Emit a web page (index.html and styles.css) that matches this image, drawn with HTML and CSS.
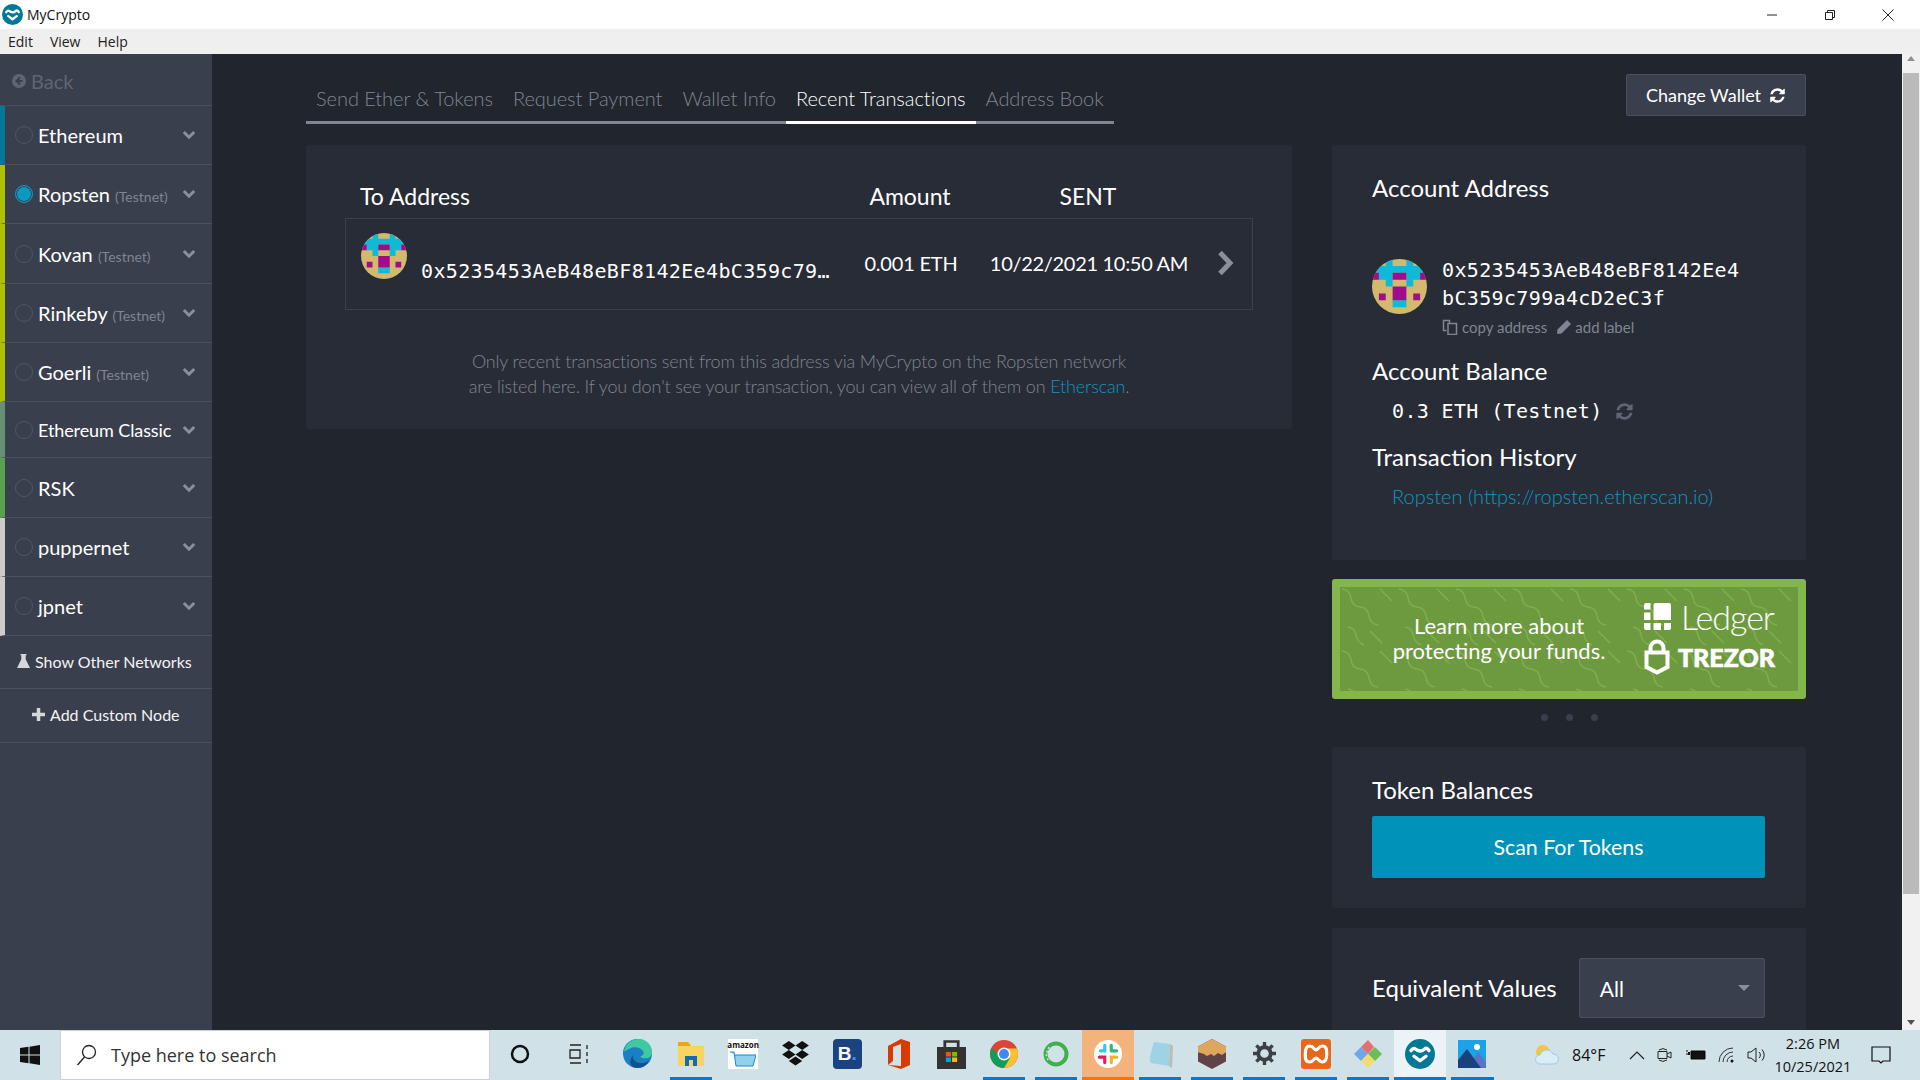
FILE: index.html
```html
<!DOCTYPE html>
<html lang="en">
<head>
  <meta charset="UTF-8" />
  <meta name="viewport" content="width=device-width, initial-scale=1.0" />
  <title>MyCrypto</title>
  <link rel="stylesheet" href="styles.css">
</head>
<body>
  <svg class="defs" width="0" height="0">
    <defs>
      <symbol id="identicon" viewBox="0 0 8 8">
        <rect width="8" height="8" fill="#d2b96e" />
        <path fill="#0fb9d8" d="M2 0h1v1h2V0h1v1h2v1H0V1h2zM1 2h2v1H1zM5 2h2v1H5zM2 3h1v1H2zM5 3h1v1H5zM3 6h2v1H3z" />
        <path fill="#a10b8e" d="M0 2h1v1H0zM3 2h2v1H3zM7 2h1v1H7zM3 4h2v2H3zM1 5h1v1H1zM6 5h1v1H6z" />
      </symbol>
      <symbol id="refresh" viewBox="0 0 1792 1792">
        <path fill="currentColor" d="M1639 1056q0 5-1 7-64 268-268 434.5t-478 166.5q-146 0-282.5-55t-243.5-157l-129 129q-19 19-45 19t-45-19-19-45v-448q0-26 19-45t45-19h448q26 0 45 19t19 45-19 45l-137 137q71 66 161 102t187 36q134 0 250-65t186-179q11-17 53-117 8-23 30-23h192q13 0 22.5 9.5t9.5 22.5zm25-800v448q0 26-19 45t-45 19h-448q-26 0-45-19t-19-45 19-45l138-138q-148-137-349-137-134 0-250 65t-186 179q-11 17-53 117-8 23-30 23h-199q-13 0-22.5-9.5t-9.5-22.5v-7q65-268 270-434.5t480-166.5q146 0 284 55.5t245 156.5l130-129q19-19 45-19t45 19 19 45z" />
      </symbol>
      <symbol id="chev" viewBox="0 0 14 10">
        <path d="M1.8 2 7 7.2 12.2 2" fill="none" stroke="currentColor" stroke-width="3" />
      </symbol>
      <symbol id="heart-mark" viewBox="0 0 40 40">
        <circle cx="20" cy="20" r="20" fill="#007896" />
        <path d="M8 15.500q3-4 6-2t6 2.500 6-2.500 6 2" fill="none" stroke="#fff" stroke-width="4.500" stroke-linecap="round" />
        <path d="M12 23l8 6 8-6" fill="none" stroke="#fff" stroke-width="4.500" stroke-linecap="round" stroke-linejoin="round" />
      </symbol>
      <pattern id="squiggle" width="57" height="62" patternUnits="userSpaceOnUse">
        <path d="M2 2q8 1 9 9t9 9 9 9 9 9M30 44l12 12M40 2l12 12M8 40q7 1 8 8t8 10" fill="none" stroke="#7fae4b" stroke-width="1.500" />
      </pattern>
    </defs>
  </svg>

  <div class="window">
    <header class="titlebar">
      <svg class="app-logo" width="21" height="21"><use href="#heart-mark" /></svg>
      <span class="app-name">MyCrypto</span>
      <div class="win-controls">
        <svg width="12" height="12" viewBox="0 0 12 12"><path d="M1 6h10" stroke="#222" /></svg>
        <svg width="12" height="12" viewBox="0 0 12 12"><path d="M1.500 3.500h7v7h-7zM3.500 3.500v-2h7v7h-2" fill="none" stroke="#222" /></svg>
        <svg width="12" height="12" viewBox="0 0 12 12"><path d="M.5.500l11 11M11.500.500l-11 11" stroke="#222" /></svg>
      </div>
    </header>
    <nav class="menubar">
      <span>Edit</span>
      <span>View</span>
      <span>Help</span>
    </nav>

    <div class="app">
      <aside class="sidebar">
        <div class="back">
          <svg width="14" height="14" viewBox="0 0 14 14"><circle cx="7" cy="7" r="7" fill="currentColor" /><path d="M8 3.500 4.500 7 8 10.500M5 7h5.500" fill="none" stroke="#3a3f4d" stroke-width="2" /></svg>
          <span>Back</span>
        </div>
        <div class="net mainnet"><i class="radio"></i><span class="net-name">Ethereum</span><svg class="chev" width="14" height="10"><use href="#chev" /></svg></div>
        <div class="net testnet"><i class="radio on"></i><span class="net-name">Ropsten <small>(Testnet)</small></span><svg class="chev" width="14" height="10"><use href="#chev" /></svg></div>
        <div class="net testnet tall"><i class="radio"></i><span class="net-name">Kovan <small>(Testnet)</small></span><svg class="chev" width="14" height="10"><use href="#chev" /></svg></div>
        <div class="net testnet"><i class="radio"></i><span class="net-name">Rinkeby <small>(Testnet)</small></span><svg class="chev" width="14" height="10"><use href="#chev" /></svg></div>
        <div class="net testnet"><i class="radio"></i><span class="net-name">Goerli <small>(Testnet)</small></span><svg class="chev" width="14" height="10"><use href="#chev" /></svg></div>
        <div class="net classic short"><i class="radio"></i><span class="net-name narrow">Ethereum Classic</span><svg class="chev" width="14" height="10"><use href="#chev" /></svg></div>
        <div class="net rsk tall"><i class="radio"></i><span class="net-name">RSK</span><svg class="chev" width="14" height="10"><use href="#chev" /></svg></div>
        <div class="net custom"><i class="radio"></i><span class="net-name">puppernet</span><svg class="chev" width="14" height="10"><use href="#chev" /></svg></div>
        <div class="net custom"><i class="radio"></i><span class="net-name">jpnet</span><svg class="chev" width="14" height="10"><use href="#chev" /></svg></div>
        <div class="side-action show-other">
          <svg width="13" height="14" viewBox="0 0 13 14"><path fill="#d5d7dc" d="M3.500 0h6v1.200h-.8v4L13 14H0l4.300-8.800v-4h-.8z" /></svg>
          <span>Show Other Networks</span>
        </div>
        <div class="side-action add-node">
          <svg width="13" height="13" viewBox="0 0 13 13"><path d="M6.500 0v13M0 6.500h13" stroke="#d5d7dc" stroke-width="3.500" /></svg>
          <span>Add Custom Node</span>
        </div>
      </aside>

      <main class="content">
        <div class="top-row">
          <div class="tabs">
            <a class="tab">Send Ether &amp; Tokens</a>
            <a class="tab">Request Payment</a>
            <a class="tab">Wallet Info</a>
            <a class="tab active">Recent Transactions</a>
            <a class="tab">Address Book</a>
          </div>
          <button class="change-wallet">Change Wallet <svg width="17" height="17"><use href="#refresh" /></svg></button>
        </div>

        <div class="columns">
          <section class="card tx-card">
            <div class="tx-head">
              <span class="col-to">To Address</span>
              <span class="col-amount">Amount</span>
              <span class="col-sent">SENT</span>
            </div>
            <div class="tx-row">
              <div class="col-to tx-to">
                <svg class="tx-icon" width="46" height="46"><use href="#identicon" /></svg>
                <span class="mono tx-address">0x5235453AeB48eBF8142Ee4bC359c79…</span>
              </div>
              <span class="col-amount">0.001 ETH</span>
              <span class="col-sent tx-date">10/22/2021 10:50 AM</span>
              <svg class="tx-arrow" width="20" height="28" viewBox="0 0 20 28"><path d="M4 3.500 14 14 4 24.500" fill="none" stroke="#8a8f9b" stroke-width="5" /></svg>
            </div>
            <p class="tx-note">Only recent transactions sent from this address via MyCrypto on the Ropsten network<br>are listed here. If you don't see your transaction, you can view all of them on <a>Etherscan</a>.</p>
          </section>

          <div class="side-col">
            <section class="card account-card">
              <h3 class="account-title">Account Address</h3>
              <div class="account-row">
                <svg class="account-icon" width="55" height="55"><use href="#identicon" /></svg>
                <div>
                  <div class="mono account-address">0x5235453AeB48eBF8142Ee4<br>bC359c799a4cD2eC3f</div>
                  <div class="account-links">
                    <svg width="16" height="16" viewBox="0 0 16 16"><path d="M6 4.500h8.500v11H6zM4.500 11.500h-3v-10h6v3" fill="none" stroke="#7f8592" stroke-width="1.500" /></svg>
                    <span>copy address</span>
                    <svg class="pencil" width="14" height="14" viewBox="0 0 14 14"><path fill="#7f8592" d="M10 0l4 4-9.500 9.500L0 14l.5-4.500z" /></svg>
                    <span>add label</span>
                  </div>
                </div>
              </div>
              <h3 class="balance-title">Account Balance</h3>
              <div class="balance">
                <span class="mono">0.3 ETH (Testnet)</span>
                <svg width="19" height="19"><use href="#refresh" /></svg>
              </div>
              <h3 class="history-title">Transaction History</h3>
              <a class="history-link">Ropsten (https://ropsten.etherscan.io)</a>
            </section>

            <div class="promo">
              <svg class="promo-pattern" width="100%" height="100%"><rect width="100%" height="100%" fill="url(#squiggle)" /></svg>
              <p class="promo-text">Learn more about<br>protecting your funds.</p>
              <div class="promo-logos">
                <div class="logo-line">
                  <svg width="27" height="27" viewBox="0 0 27 27"><path fill="#fff" d="M9.500 2a2 2 0 0 1 2-2H25a2 2 0 0 1 2 2v15H9.500zM0 2a2 2 0 0 1 2-2h4.500v6.500H0zM0 9.500h6.500V17H0zM0 20h6.500v7H2a2 2 0 0 1-2-2zM9.500 20h7.500v7H9.500zM20 20h7v5a2 2 0 0 1-2 2h-5z" /></svg>
                  <span class="ledger">Ledger</span>
                </div>
                <div class="logo-line">
                  <svg width="26" height="36" viewBox="0 0 26 36"><path fill="none" stroke="#fff" stroke-width="4" d="M6.500 13V9a6.500 6.500 0 0 1 13 0v4M2.500 13.500h21V28L13 33.500 2.500 28z" /></svg>
                  <span class="trezor">TREZOR</span>
                </div>
              </div>
            </div>
            <div class="dots"><i></i><i></i><i></i></div>

            <section class="card token-card">
              <h3>Token Balances</h3>
              <button class="scan">Scan For Tokens</button>
            </section>

            <section class="card equiv-card">
              <h3>Equivalent Values</h3>
              <div class="select"><span>All</span><i class="caret"></i></div>
            </section>
          </div>
        </div>
      </main>

      <div class="scrollbar">
        <span class="arrow up"></span>
        <div class="thumb"></div>
        <span class="arrow down"></span>
      </div>
    </div>

    <footer class="taskbar">
      <div class="start">
        <svg width="20" height="20" viewBox="0 0 20 20"><path fill="#111" d="M0 3l8.500-1.200v7.700H0zM9.500 1.700 20 0v9.500H9.500zM0 10.500h8.500v7.700L0 17zM9.500 10.500H20V20L9.500 18.300z" /></svg>
      </div>
      <div class="search">
        <svg width="22" height="24" viewBox="0 0 22 24"><circle cx="13" cy="9" r="6.500" fill="none" stroke="#222" stroke-width="1.300" /><path d="M8.500 14 1.500 22" stroke="#222" stroke-width="1.300" /></svg>
        <span>Type here to search</span>
      </div>
      <div class="task-apps">
        <div class="task-app cortana"><svg width="20" height="20"><circle cx="10" cy="10" r="8" fill="none" stroke="#111" stroke-width="2.500" /></svg></div>
        <div class="task-app taskview"><svg width="20" height="20" viewBox="0 0 20 20"><path d="M1 1h11M1 19h11M1 6h10v8H1zM18 1v4M18 8v4M18 15v4" fill="none" stroke="#222" stroke-width="1.300" /></svg></div>
        <div class="task-app edge"><svg width="31" height="31" viewBox="0 0 32 32"><circle cx="16" cy="16" r="15" fill="#1b7fc4" /><path d="M2 14C4 4 12 1 17 1c8 0 14 6 14 14 0 4-3 6-7 6-3 0-5-1-5-2 3-1 4-3 3-5-2-4-9-6-14-3-3 1-5 3-6 3z" fill="#3fc9a0" /><path d="M11 18c0 5 4 8 9 8 3 0 6-1 8-3-2 5-7 8-12 8-7 0-10-6-5-13z" fill="#13508f" /></svg></div>
        <div class="task-app open"><svg width="28" height="24" viewBox="0 0 28 24"><path fill="#e8a717" d="M1 0h10l3 4H1z" /><path fill="#fbd35f" d="M1 4h26v20H1z" /><path fill="#0f6cbd" d="M8 14h12v10h-4v-6h-4v6H8z" /></svg></div>
        <div class="task-app"><div class="amazon"><span>amazon</span><svg width="26" height="17" viewBox="0 0 26 17"><path d="M0 1h4l2 14h17l3-11H5" fill="#8fd2ee" stroke="#1e88c9" /></svg></div></div>
        <div class="task-app"><svg width="29" height="26" viewBox="0 0 26 26" preserveAspectRatio="none"><path fill="#111" d="M7 0l6 4.500L7 9 1 4.500zM19 0l6 4.500L19 9l-6-4.500zM7 9l6 4.500L7 18l-6-4.500zM19 9l6 4.500-6 4.500-6-4.500zM13 15.500l6 4.500-6 4.500L7 20z" /></svg></div>
        <div class="task-app"><div class="booking">B<em>.</em></div></div>
        <div class="task-app"><svg width="24" height="30" viewBox="0 0 24 30"><path fill="#d83b01" d="M14 0l9 3v23l-9 4-13-4 13 1V5L6 8v14l-5 4V7z" /></svg></div>
        <div class="task-app"><svg width="29" height="30" viewBox="0 0 26 30" preserveAspectRatio="none"><path fill="#333" d="M0 8h26v22H0z" /><path d="M7 8V2.500h12V8" fill="none" stroke="#333" stroke-width="2.500" /><path fill="#f25022" d="M8 13h4.500v4.500H8z" /><path fill="#7fba00" d="M13.500 13H18v4.500h-4.500z" /><path fill="#00a4ef" d="M8 18.500h4.500V23H8z" /><path fill="#ffb900" d="M13.500 18.500H18V23h-4.500z" /></svg></div>
        <div class="task-app open"><svg width="28" height="28" viewBox="0 0 28 28"><circle cx="14" cy="14" r="14" fill="#db4437" /><path d="M14 28a14 14 0 0 0 14-14c0-2-.4-4-1.200-5.500H14z" fill="#fbc02d" /><path d="M1.500 8A14 14 0 0 0 14 28l6-10-6 0-8-6z" fill="#0f9d58" /><circle cx="14" cy="14" r="6.500" fill="#fff" /><circle cx="14" cy="14" r="5" fill="#4285f4" /></svg></div>
        <div class="task-app open"><svg width="26" height="26" viewBox="0 0 26 26"><circle cx="13" cy="13" r="10.500" fill="none" stroke="#3fb14a" stroke-width="4" /><path d="M6 6 3 13l2 6" fill="none" stroke="#d0e1e8" stroke-width="1.500" stroke-dasharray="2 2" /></svg></div>
        <div class="task-app open active"><svg width="28" height="28" viewBox="0 0 26 26"><circle cx="13" cy="13" r="13" fill="#fff" /><path d="M10 5v5H6" fill="none" stroke="#36c5f0" stroke-width="3" stroke-linecap="round" /><path d="M21 10h-5M16 10V5" fill="none" stroke="#2eb67d" stroke-width="3" stroke-linecap="round" /><path d="M16 21v-5h5" fill="none" stroke="#ecb22e" stroke-width="3" stroke-linecap="round" /><path d="M5 16h5v5" fill="none" stroke="#e01e5a" stroke-width="3" stroke-linecap="round" /></svg></div>
        <div class="task-app open"><svg width="30" height="30" viewBox="0 0 30 30"><path fill="#9fd3e4" d="M9 3l16 2-1 22-18-3C3 22 7 10 9 3z" /><path d="M25 5l3 2-1 22-3-2z" fill="#bbb" /></svg></div>
        <div class="task-app open"><svg width="28" height="30" viewBox="0 0 28 32" preserveAspectRatio="none"><path fill="#5e4446" d="M14 0l14 8v16l-14 8-14-8V8z" /><path fill="#dda75e" d="M14 0l14 8v6l-4 3-4-2-4 3-3-2-4 2-3-2-6-2V8z" /></svg></div>
        <div class="task-app open"><svg width="23" height="23" viewBox="0 0 24 24"><circle cx="12" cy="12" r="6.500" fill="none" stroke="#3b4146" stroke-width="4" /><path d="M12 0v5M12 19v5M0 12h5M19 12h5M3.500 3.500l3.500 3.500M17 17l3.500 3.500M3.500 20.500 7 17M17 7l3.500-3.500" stroke="#3b4146" stroke-width="3.500" /></svg></div>
        <div class="task-app open"><svg width="30" height="30" viewBox="0 0 28 30" preserveAspectRatio="none"><rect width="28" height="30" rx="3" fill="#e8671a" /><path d="M8 7c4 0 4 4 6 4s2-4 6-4 4 4 4 8-1 8-4 8-4-4-6-4-2 4-6 4-4-4-4-8 1-8 4-8z" fill="none" stroke="#fff" stroke-width="3" /></svg></div>
        <div class="task-app open"><svg width="30" height="30" viewBox="0 0 30 30"><path fill="#6fa8e8" d="M8 8l7 7-7 7-7-7z" /><path fill="#e46f6f" d="M15 1l6 7-6 7-7-7z" /><path fill="#6dbb5a" d="M22 8l7 7-7 7-7-7z" /><path fill="#f2dd6c" d="M15 15l7 7-7 7-7-7z" /></svg></div>
        <div class="task-app open current"><svg width="30" height="30"><use href="#heart-mark" /></svg></div>
        <div class="task-app open"><svg width="28" height="28" viewBox="0 0 28 28"><rect width="28" height="28" fill="#1aa3e8" /><circle cx="19" cy="7" r="3" fill="#fff" /><path fill="#5b74c4" d="M10 28l10-16 8 10v6z" /><path fill="#19417e" d="M0 28V20L9 9l14 19z" /></svg></div>
      </div>
      <div class="tray">
        <svg class="weather" width="26" height="22" viewBox="0 0 26 22"><circle cx="9" cy="8" r="7" fill="#f3c54a" /><path d="M6 20a4.500 4.500 0 0 1 0-9 7 7 0 0 1 13-1 5 5 0 0 1 1 10z" fill="#d9edf7" stroke="#9ccbe6" /></svg>
        <span class="temp">84°F</span>
        <svg width="16" height="10" viewBox="0 0 16 10"><path d="M1 9l7-7 7 7" fill="none" stroke="#222" stroke-width="1.200" /></svg>
        <svg width="16" height="18" viewBox="0 0 16 18"><path d="M2 4a7 7 0 0 1 8 0M2 14a7 7 0 0 0 8 0M1 5.500h9v7H1zM10 8l4-2v6l-4-2" fill="none" stroke="#222" /></svg>
        <svg width="20" height="12" viewBox="0 0 20 12"><path d="M5 2h14v8H5zM0 2h2M0 5h3" stroke="#111" /><path d="M6 3h12v6H6zM2 3h2v3H2z" fill="#111" /></svg>
        <svg width="16" height="16" viewBox="0 0 16 16"><path d="M1 15A14 14 0 0 1 15 1M5 15A10 10 0 0 1 15 5M9 15a6 6 0 0 1 6-6" fill="none" stroke="#333" /><circle cx="14" cy="14" r="1.500" fill="#111" /></svg>
        <svg width="20" height="18" viewBox="0 0 20 18"><path d="M1 6h3l5-4v14l-5-4H1zM12 6a4 4 0 0 1 0 6M15 3.500a8 8 0 0 1 0 11" fill="none" stroke="#222" /></svg>
        <div class="clock"><span>2:26 PM</span><span>10/25/2021</span></div>
        <svg class="notify" width="20" height="20" viewBox="0 0 20 20"><path d="M1 2h18v14h-7l-2 2-2-2H1z" fill="none" stroke="#111" stroke-width="1.200" /></svg>
      </div>
    </footer>
  </div>
</body>
</html>
```

FILE: styles.css
```css
* {
  box-sizing: border-box;
}
html, body {
  margin: 0;
  height: 100%;
  overflow: hidden;
}
body {
  font-family: "Lato", sans-serif;
  color: #fff;
  background: #21252e;
}
.defs {
  position: absolute;
}
.window {
  display: flex;
  flex-direction: column;
  height: 1080px;
}
h3 {
  margin: 0;
  font-size: 24px;
  font-weight: 400;
  line-height: 30px;
}
.mono {
  font-family: "DejaVu Sans Mono", monospace;
  font-size: 20px;
  letter-spacing: 0.35px;
}

/* window chrome */
.titlebar {
  display: flex;
  align-items: center;
  height: 29px;
  padding-left: 2px;
  background: #fff;
  color: #111;
}
.app-name {
  margin-left: 4px;
  font-family: "Open Sans", sans-serif;
  font-size: 14px;
}
.win-controls {
  display: flex;
  gap: 46px;
  margin-left: auto;
  padding-right: 26px;
}
.menubar {
  display: flex;
  gap: 17px;
  align-items: center;
  height: 25px;
  padding-left: 8px;
  background: #efefef;
  color: #222;
  font-family: "Open Sans", sans-serif;
  font-size: 14px;
}

.app {
  display: flex;
  flex: 1;
  min-height: 0;
}

/* sidebar */
.sidebar {
  flex: 0 0 212px;
  background: #3a3f4d;
}
.back {
  display: flex;
  align-items: center;
  gap: 5px;
  height: 52px;
  padding: 2px 0 0 12px;
  border-bottom: 1px solid #4a4f5d;
  color: #5f6573;
  font-size: 20px;
}
.net {
  display: flex;
  align-items: center;
  height: 59px;
  padding-right: 16px;
  border-bottom: 1px solid #4a4f5d;
  border-left: 5px solid #007896;
  font-size: 20px;
}
.net.tall {
  height: 60px;
}
.net.short {
  height: 56px;
}
.testnet {
  border-left-color: #adc101;
}
.classic {
  border-left-color: #669073;
}
.rsk {
  border-left-color: #58a052;
}
.custom {
  border-left-color: #ccc;
}
.radio {
  flex: none;
  width: 18px;
  height: 18px;
  margin-left: 10px;
  border: 1px solid #50566a;
  border-radius: 50%;
}
.radio.on {
  border-color: #0e97c0;
  background: #0e97c0;
  box-shadow: inset 0 0 0 1px #3a3f4d;
}
.net-name {
  margin-left: 5px;
  white-space: nowrap;
}
.net-name.narrow {
  font-size: 18px;
  letter-spacing: -0.1px;
}
.net-name small {
  color: #7f8592;
  font-size: 14px;
}
.chev {
  margin-left: auto;
  color: #8a8f9b;
}
.side-action {
  display: flex;
  align-items: center;
  height: 53px;
  padding-bottom: 2px;
  border-bottom: 1px solid #4a4f5d;
  color: #f2f3f5;
  font-size: 16px;
}
.show-other {
  gap: 5px;
  padding-left: 17px;
}
.add-node {
  gap: 5px;
  height: 54px;
  padding-left: 32px;
}

/* main area */
.content {
  flex: 1;
  min-width: 0;
  padding: 20px 96px 0 94px;
  overflow: hidden;
}
.top-row {
  display: flex;
  justify-content: space-between;
  height: 50px;
  margin-bottom: 21px;
}
.tabs {
  display: flex;
  height: 50px;
  border-bottom: 3px solid #7f8592;
}
.tab {
  height: 50px;
  padding: 12px 10px 0;
  color: #7f8592;
  font-size: 20px;
  font-weight: 300;
  letter-spacing: -0.045px;
}
.tab.active {
  border-bottom: 3px solid #fff;
  color: #fff;
}
.change-wallet {
  display: flex;
  align-items: center;
  justify-content: center;
  gap: 8px;
  width: 180px;
  height: 42px;
  border: 1px solid #4a4f5d;
  border-radius: 2px;
  background: #3a3f4d;
  color: #fff;
  font-family: inherit;
  font-size: 18px;
}
.columns {
  display: grid;
  grid-template-columns: 986px 474px;
  gap: 40px;
  align-items: start;
}
.card {
  border-radius: 3px;
  background: #282c36;
}

/* transactions */
.tx-card {
  height: 284px;
  padding: 37px 39px 0;
}
.tx-head {
  display: flex;
  align-items: center;
  height: 36px;
  padding-bottom: 8px;
  font-size: 23px;
}
.col-to {
  flex: 0 0 500px;
  min-width: 0;
  padding-left: 15px;
}
.col-amount {
  flex: 0 0 130px;
  text-align: center;
}
.col-sent {
  flex: 0 0 226px;
  text-align: center;
}
.tx-row {
  display: flex;
  align-items: center;
  height: 92px;
  padding-bottom: 2px;
  border: 1px solid #3a3f4d;
  font-size: 20px;
  letter-spacing: -0.2px;
}
.tx-date {
  letter-spacing: -0.3px;
}
.tx-to {
  display: flex;
  align-items: center;
  gap: 14px;
}
.tx-icon {
  flex: none;
  margin-bottom: 14px;
  border-radius: 50%;
}
.tx-address {
  margin-top: 16px;
  white-space: nowrap;
}
.tx-arrow {
  margin-left: 14px;
}
.tx-note {
  margin: 39px 0 0;
  color: #7f8592;
  font-size: 18px;
  font-weight: 300;
  letter-spacing: -0.15px;
  line-height: 25px;
  text-align: center;
}
.tx-note a {
  color: #0e97c0;
}

/* right column */
.account-card {
  height: 415px;
  padding: 28px 40px 0;
}
.account-row {
  display: flex;
  gap: 15px;
  margin-top: 53px;
}
.account-icon {
  flex: none;
  margin-top: 3px;
  border-radius: 50%;
}
.account-address {
  line-height: 28px;
}
.account-links {
  display: flex;
  align-items: center;
  gap: 4px;
  margin-top: 6px;
  color: #7f8592;
  font-size: 15px;
}
.pencil {
  margin-left: 6px;
}
.balance-title {
  margin-top: 20px;
}
.balance {
  display: flex;
  align-items: center;
  gap: 12px;
  margin: 13px 0 0 20px;
  color: #fff;
}
.balance svg {
  color: #5f6573;
}
.history-title {
  margin-top: 19px;
}
.history-link {
  display: block;
  margin: 12px 0 0 20px;
  color: #0e97c0;
  font-size: 20px;
  font-weight: 300;
}

.promo {
  position: relative;
  display: flex;
  align-items: center;
  height: 120px;
  margin-top: 19px;
  border: 8px solid #84b74b;
  border-radius: 3px;
  background: #6e9a3f;
}
.promo-pattern {
  position: absolute;
  inset: 0;
}
.promo-text {
  position: relative;
  flex: 0 0 304px;
  margin: -3px 0 0;
  padding-left: 14px;
  font-size: 22px;
  line-height: 25px;
  text-align: center;
}
.promo-logos {
  position: relative;
  display: flex;
  flex-direction: column;
  gap: 2px;
  margin-top: -5px;
}
.logo-line {
  display: flex;
  align-items: center;
  gap: 8px;
  height: 38px;
}
.logo-line:first-child {
  gap: 10px;
}
.ledger {
  font-size: 34px;
  font-weight: 300;
  letter-spacing: -1px;
}
.trezor {
  font-size: 25px;
  font-weight: 900;
  -webkit-text-stroke: 0.6px #fff;
}
.dots {
  display: flex;
  justify-content: center;
  gap: 18px;
  height: 48px;
  padding-top: 15px;
}
.dots i {
  width: 7px;
  height: 7px;
  border-radius: 50%;
  background: #3a3f4d;
}
.token-card {
  height: 161px;
  padding: 28px 40px 0;
}
.token-card h3 {
  margin-bottom: 11px;
}
.scan {
  width: 393px;
  height: 62px;
  border: none;
  border-radius: 2px;
  background: #0092b8;
  color: #fff;
  font-family: inherit;
  font-size: 21.4px;
}
.equiv-card {
  display: flex;
  align-items: center;
  gap: 22px;
  height: 160px;
  margin-top: 20px;
  padding: 31px 40px 71px;
}
.equiv-card h3 {
  letter-spacing: 0.05px;
  white-space: nowrap;
}
.select {
  display: flex;
  align-items: center;
  justify-content: space-between;
  width: 186px;
  height: 60px;
  padding: 0 14px 0 20px;
  border: 1px solid #4a4f5d;
  border-radius: 2px;
  background: #3a3f4d;
  font-size: 21px;
}
.caret {
  border-top: 6px solid #8a8f9b;
  border-right: 6px solid transparent;
  border-left: 6px solid transparent;
}

.scrollbar {
  display: flex;
  flex: 0 0 18px;
  flex-direction: column;
  align-items: center;
  background: #f1f1f1;
}
.thumb {
  width: 16px;
  height: 821px;
  background: #bababa;
}
.arrow {
  height: 17px;
  border-right: 4px solid transparent;
  border-left: 4px solid transparent;
}
.arrow.up {
  margin-top: 2px;
  height: 0;
  margin-bottom: 12px;
  border-bottom: 5px solid #8f8f8f;
}
.arrow.down {
  height: 0;
  margin-top: auto;
  margin-bottom: 5px;
  border-top: 5px solid #505050;
}

/* taskbar */
.taskbar {
  display: flex;
  align-items: center;
  height: 50px;
  background: #d0e1e8;
  color: #111;
  font-family: "Open Sans", sans-serif;
}
.start {
  display: flex;
  flex: 0 0 60px;
  justify-content: center;
}
.search {
  display: flex;
  align-items: center;
  gap: 13px;
  width: 430px;
  height: 50px;
  padding-left: 15px;
  border: 1px solid #c6d4da;
  background: #fff;
  color: #333;
  font-size: 18px;
}
.task-apps {
  display: flex;
}
.task-app {
  display: flex;
  flex: 0 0 52.1px;
  align-items: center;
  justify-content: center;
  height: 50px;
  border-bottom: 3px solid transparent;
}
.task-app.cortana {
  flex-basis: 59px;
}
.task-app.taskview {
  flex-basis: 60px;
}
.task-app.edge {
  flex-basis: 56px;
}
.task-app.open {
  border-image: linear-gradient(90deg, transparent 6px, #0078d4 6px, #0078d4 46px, transparent 46px) 1;
}
.task-app.active {
  background: #f4b37c;
  border-image: none;
  border-bottom-color: #f97306;
}
.task-app.current {
  background: #ecf3f6;
  border-image: none;
  border-bottom-color: #0078d4;
}
.amazon {
  display: flex;
  flex-direction: column;
  align-items: center;
  width: 30px;
  height: 30px;
  background: #fff;
  font-size: 8px;
  font-weight: 700;
  line-height: 12px;
}
.booking {
  width: 29px;
  height: 30px;
  border-radius: 4px;
  background: #1b4381;
  color: #fff;
  font-family: "Liberation Sans", sans-serif;
  font-size: 19px;
  font-weight: 700;
  line-height: 30px;
  text-align: center;
}
.booking em {
  color: #2aa5e0;
  font-style: normal;
}
.tray {
  display: flex;
  flex: 1;
  align-items: center;
  gap: 12.5px;
  padding-left: 35px;
}
.temp {
  margin-right: 11px;
  font-size: 16px;
}
.clock {
  display: flex;
  flex-direction: column;
  align-items: center;
  margin-left: -5px;
  font-size: 14.5px;
  line-height: 23px;
}
.notify {
  margin-left: 7px;
}
```
